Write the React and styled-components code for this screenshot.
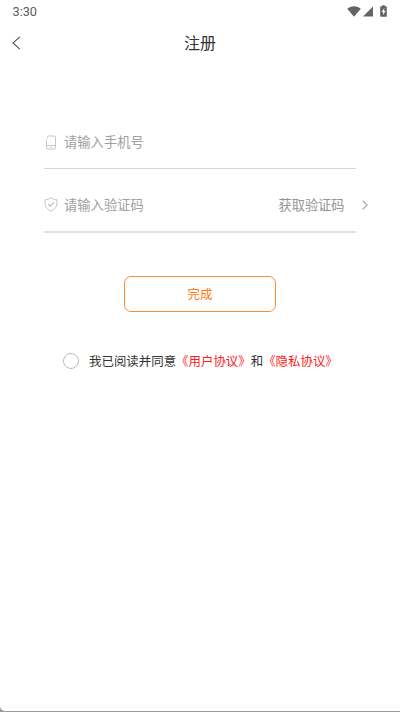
import React, { useState } from "react";
import styled, { createGlobalStyle } from "styled-components";

export default function Register() {
  const [phone, setPhone] = useState("");
  const [code, setCode] = useState("");
  const [agreed, setAgreed] = useState(false);

  return (
    <>
      <GlobalStyle />
      <Screen>
        <StatusBar>
          <Time>3:30</Time>
          <StatusIcons>
            <WifiIcon />
            <SignalIcon />
            <BatteryIcon />
          </StatusIcons>
        </StatusBar>

        <NavBar>
          <BackButton aria-label="返回">
            <svg width="9" height="14" viewBox="0 0 9 14" fill="none">
              <path d="M7.8 0.8L1 7L7.8 13.2" stroke="#555" strokeWidth="1.1" />
            </svg>
          </BackButton>
          <Title>注册</Title>
        </NavBar>

        <Form onSubmit={(e) => e.preventDefault()}>
          <Field>
            <FieldIcon>
              <PhoneIcon />
            </FieldIcon>
            <Input
              placeholder="请输入手机号"
              value={phone}
              onChange={(e) => setPhone(e.target.value)}
            />
          </Field>
          <Field $code>
            <FieldIcon>
              <ShieldIcon />
            </FieldIcon>
            <Input
              placeholder="请输入验证码"
              value={code}
              onChange={(e) => setCode(e.target.value)}
            />
            <CodeButton type="button">
              获取验证码
              <svg width="6" height="10" viewBox="0 0 6 10" fill="none">
                <path d="M0.7 0.8L5.1 5L0.7 9.2" stroke="#aaa" strokeWidth="1.2" />
              </svg>
            </CodeButton>
          </Field>
          <SubmitButton type="submit">完成</SubmitButton>
        </Form>

        <Agreement>
          <Radio
            type="button"
            aria-label="同意"
            $checked={agreed}
            onClick={() => setAgreed(!agreed)}
          />
          <AgreementText>
            我已阅读并同意<Link>《用户协议》</Link>和<Link>《隐私协议》</Link>
          </AgreementText>
        </Agreement>
      </Screen>
    </>
  );
}

// icons
const WifiIcon = () => (
  <svg width="14" height="11" viewBox="0 0 14 11">
    <path d="M0.2 2.7C2.1 1.2 4.4 0.3 7 0.3S11.9 1.2 13.8 2.7L7 10.8Z" fill="#646464" />
  </svg>
);

const SignalIcon = () => (
  <svg width="10" height="11" viewBox="0 0 10 11">
    <path d="M10 0.4V10.6H0Z" fill="#646464" />
  </svg>
);

const BatteryIcon = () => (
  <svg width="7" height="12" viewBox="0 0 7 12">
    <path
      d="M2.2 0.2H4.8V1.2H6.2Q6.8 1.2 6.8 1.9V11.1Q6.8 11.8 6.2 11.8H0.8Q0.2 11.8 0.2 11.1V1.9Q0.2 1.2 0.8 1.2H2.2Z"
      fill="#646464"
    />
    <path d="M4.3 3L1.6 7H3.1V10L5.5 6H4.2Z" fill="#fff" />
  </svg>
);

const PhoneIcon = () => (
  <svg width="12" height="15" viewBox="0 0 12 15" fill="none" stroke="#c6c6c6" strokeWidth="1">
    <path d="M2.5 3.5V2.2Q2.5 1 3.6 1H9.2Q10.5 1 10.5 2.2V12.7Q10.5 14 9.2 14H2.8Q1.5 14 1.5 12.7V4.5" />
    <path d="M1.5 10.5H10.5M5.2 12.3H6.8" />
  </svg>
);

const ShieldIcon = () => (
  <svg width="14" height="15" viewBox="0 0 14 15" fill="none" stroke="#bebebe" strokeWidth="0.9">
    <path d="M7 0.8C5.3 2.1 3.4 2.6 1.1 2.6V6.8C1.1 10.2 3.5 12.5 7 14C10.5 12.5 12.9 10.2 12.9 6.8V2.6C10.6 2.6 8.7 2.1 7 0.8Z" />
    <path d="M4.2 7L6.3 9.1L10 5.3" strokeWidth="1.1" />
  </svg>
);

// styles
const GlobalStyle = createGlobalStyle`
  * {
    box-sizing: border-box;
  }
  body {
    margin: 0;
    background: #9c9c9c;
    font-family: "Noto Sans CJK SC", sans-serif;
  }
  button {
    padding: 0;
    border: none;
    background: none;
    font-family: inherit;
  }
`;

const Screen = styled.div`
  height: 711px;
  background: #fff;
  border-bottom-left-radius: 5px;
  overflow: hidden;
`;

const StatusBar = styled.div`
  display: flex;
  justify-content: space-between;
  align-items: center;
  height: 22px;
  padding: 0 13px 0 12.5px;
`;

const Time = styled.span`
  font-family: Roboto, sans-serif;
  font-size: 12.7px;
  color: #5c5c5c;
`;

const StatusIcons = styled.div`
  display: flex;
  align-items: center;

  svg:nth-child(2) {
    margin: 0 7px 0 2px;
  }
`;

const NavBar = styled.div`
  display: grid;
  grid-template-columns: 40px 1fr 40px;
  align-items: center;
  height: 42px;
`;

const BackButton = styled.button`
  display: flex;
  padding-left: 12px;
`;

const Title = styled.h1`
  margin: 0;
  padding-bottom: 2px;
  font-size: 16px;
  font-weight: 400;
  line-height: 24px;
  text-align: center;
  color: #333;
`;

const Form = styled.form`
  display: flex;
  flex-direction: column;
  padding: 52px 44px 0;
`;

const Field = styled.div`
  display: flex;
  align-items: center;
  width: 311.5px;
  height: ${(props) => (props.$code ? "64px" : "53px")};
  padding-top: ${(props) => (props.$code ? "9px" : "0")};
  border-bottom: ${(props) =>
    props.$code ? "2px solid #e2e2e4" : "1px solid #d6d6d9"};
`;

const FieldIcon = styled.span`
  display: flex;
  justify-content: center;
  width: 14px;
  margin-right: 6px;
`;

const Input = styled.input`
  flex: 1;
  min-width: 0;
  height: 24px;
  padding: 0 0 1px;
  border: none;
  outline: none;
  background: none;
  font-family: inherit;
  font-size: 13.3px;
  color: #333;

  &::placeholder {
    color: #a0a0a0;
    opacity: 1;
  }
`;

const CodeButton = styled.button`
  display: flex;
  align-items: center;
  gap: 17px;
  margin-right: -12px;
  font-size: 13.2px;
  line-height: 20px;
  color: #949494;
  white-space: nowrap;
`;

const SubmitButton = styled.button`
  align-self: center;
  width: 152px;
  height: 36px;
  margin-top: 43px;
  padding-bottom: 2px;
  border: 1px solid #fa8c35;
  border-radius: 7px;
  font-size: 12.5px;
  color: #ff7a10;
`;

const Agreement = styled.div`
  display: flex;
  align-items: center;
  padding: 38px 0 0 63px;
`;

const Radio = styled.button`
  flex: none;
  width: 16px;
  height: 16px;
  margin-right: 10px;
  border: 1px solid #bbb;
  border-radius: 50%;
  background: ${(props) => (props.$checked ? "#f58220" : "#fff")};
`;

const AgreementText = styled.p`
  margin: 0;
  padding-top: 1px;
  font-size: 12.45px;
  line-height: 20px;
  color: #333;
  white-space: nowrap;
`;

const Link = styled.span`
  color: #ff1a22;
`;
